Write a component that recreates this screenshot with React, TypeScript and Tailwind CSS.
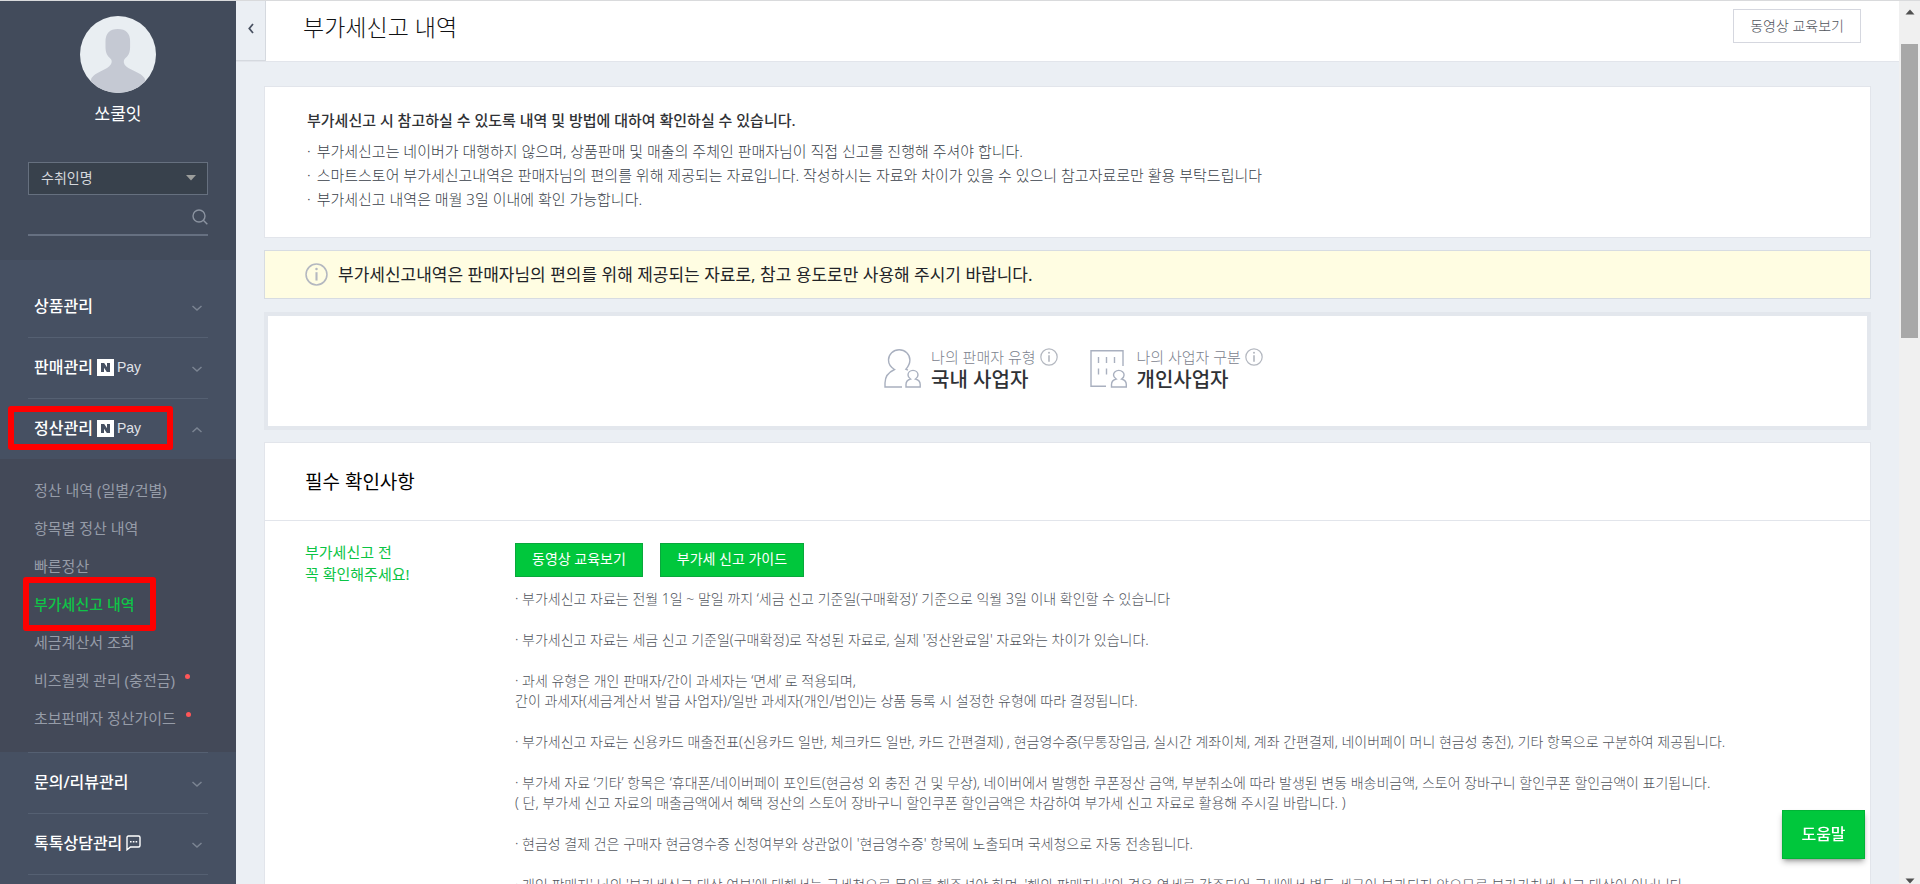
import type { ReactNode } from "react";

function Chevron({ up = false }: { up?: boolean }) {
  return (
    <svg width="12" height="8" viewBox="0 0 12 8" fill="none" stroke="#7b8492" strokeWidth="1.5" aria-hidden="true">
      <path d={up ? "M1.500 6 6 2l4.500 4" : "M1.500 2 6 6l4.500-4"} />
    </svg>
  );
}

function NPay() {
  return (
    <span className="flex items-center gap-[3px]">
      <svg width="17" height="17" viewBox="0 0 17 17" aria-hidden="true">
        <rect width="17" height="17" fill="#fff" />
        <path d="M4 4h3.200l2.800 4.200V4h3v9H9.800L7 8.800V13H4z" fill="#465062" />
      </svg>
      <span className="font-['Liberation_Sans'] text-[14px] leading-[17px] text-[#e0e3e8]">Pay</span>
    </span>
  );
}

function TalkIcon() {
  return (
    <svg width="15" height="16" viewBox="0 0 15 16" fill="none" aria-hidden="true">
      <path d="M2.500 1h10q1.500 0 1.500 1.500v8q0 1.500-1.500 1.500H4.500L1 14.800V2.500Q1 1 2.500 1z" stroke="#fff" strokeWidth="1.400" />
      <path d="M4 6h1.600v1.600H4zM6.800 6h1.600v1.600H6.800zM9.600 6h1.600v1.600H9.600z" fill="#fff" />
    </svg>
  );
}

function InfoIcon({ size }: { size: number }) {
  return (
    <svg width={size} height={size} viewBox="0 0 22 22" fill="none" stroke="#b4b8c0" strokeWidth="1.500" aria-hidden="true">
      <circle cx="11" cy="11" r="10" />
      <path d="M11 8.800v8" strokeWidth="2" />
      <circle cx="11" cy="5.800" r="1.200" fill="#b4b8c0" stroke="none" />
    </svg>
  );
}

function SellerIcon() {
  return (
    <svg width="37" height="39" viewBox="0 0 37 39" fill="none" stroke="#a9b0bf" strokeWidth="1.400" aria-hidden="true">
      <path d="M18 38H1v-4c0-6 3-10.500 9.500-13.500C6.500 18 4.500 15 4.500 11a10.700 10.300 0 0 1 21.400 0c0 4-2 7-4 9.200l2 1" />
      <path d="M22 38v-2.500c0-3 1.300-4.500 4.500-5.500-1.500-1-2.500-2.200-2.500-4a5 4.600 0 0 1 10 0c0 1.800-1 3-2.500 4 3.200 1 4.700 2.500 4.700 5.500V38z" />
    </svg>
  );
}

function BusinessIcon() {
  return (
    <svg width="37" height="39" viewBox="0 0 37 39" fill="none" stroke="#a9b0bf" strokeWidth="1.400" aria-hidden="true">
      <path d="M16 37.300H1V1.700h32V17" />
      <path d="M8.500 8v6M16.500 8v6M24.500 8v6M8.500 19.500v6M16.500 19.500v6" />
      <path d="M21.500 38v-2.500c0-3 1.500-4.500 4.700-5.500-1.500-1-2.700-2.200-2.700-4a5.300 4.600 0 0 1 10.600 0c0 1.800-1 3-2.500 4 3.200 1 4.700 2.500 4.700 5.500V38z" />
    </svg>
  );
}

function MenuRow({ label, icon, up = false, marked = false }: { label: string; icon?: ReactNode; up?: boolean; marked?: boolean }) {
  return (
    <div className="relative px-7">
      <button type="button" className="flex h-[60px] w-full items-center gap-1 pr-[5px] pb-0.5 pl-1.5 text-left text-[16px] font-medium text-white">
        <span>{label}</span>
        {icon}
        <span className="ml-auto pt-1"><Chevron up={up} /></span>
      </button>
      {marked && <span className="pointer-events-none absolute top-[7px] left-2 h-11 w-[165px] rounded-[3px] border-6 border-[#ff0000]" />}
    </div>
  );
}

const Divider = () => <div className="mx-7 h-px bg-[#556072]" />;

const subMenu = [
  { label: "정산 내역 (일별/건별)" },
  { label: "항목별 정산 내역" },
  { label: "빠른정산" },
  { label: "부가세신고 내역", active: true },
  { label: "세금계산서 조회" },
  { label: "비즈월렛 관리 (충전금)", dot: true },
  { label: "초보판매자 정산가이드", dot: true },
];

const intro = [
  "부가세신고는 네이버가 대행하지 않으며, 상품판매 및 매출의 주체인 판매자님이 직접 신고를 진행해 주셔야 합니다.",
  "스마트스토어 부가세신고내역은 판매자님의 편의를 위해 제공되는 자료입니다. 작성하시는 자료와 차이가 있을 수 있으니 참고자료로만 활용 부탁드립니다",
  "부가세신고 내역은 매월 3일 이내에 확인 가능합니다.",
];

const details = [
  ["부가세신고 자료는 전월 1일 ~ 말일 까지 ‘세금 신고 기준일(구매확정)’ 기준으로 익월 3일 이내 확인할 수 있습니다"],
  ["부가세신고 자료는 세금 신고 기준일(구매확정)로 작성된 자료로, 실제 '정산완료일' 자료와는 차이가 있습니다."],
  ["과세 유형은 개인 판매자/간이 과세자는 ‘면세’ 로 적용되며,", "간이 과세자(세금계산서 발급 사업자)/일반 과세자(개인/법인)는 상품 등록 시 설정한 유형에 따라 결정됩니다."],
  ["부가세신고 자료는 신용카드 매출전표(신용카드 일반, 체크카드 일반, 카드 간편결제) , 현금영수증(무통장입금, 실시간 계좌이체, 계좌 간편결제, 네이버페이 머니 현금성 충전), 기타 항목으로 구분하여 제공됩니다."],
  ["부가세 자료 ‘기타’ 항목은 ‘휴대폰/네이버페이 포인트(현금성 외 충전 건 및 무상), 네이버에서 발행한 쿠폰정산 금액, 부분취소에 따라 발생된 변동 배송비금액, 스토어 장바구니 할인쿠폰 할인금액이 표기됩니다.", "( 단, 부가세 신고 자료의 매출금액에서 혜택 정산의 스토어 장바구니 할인쿠폰 할인금액은 차감하여 부가세 신고 자료로 활용해 주시길 바랍니다. )"],
  ["현금성 결제 건은 구매자 현금영수증 신청여부와 상관없이 '현금영수증' 항목에 노출되며 국세청으로 자동 전송됩니다."],
  ["개인 판매자' 님의 '부가세신고 대상 여부'에 대해서는 국세청으로 문의를 해주셔야 하며, '해외 판매자님'의 경우 영세로 간주되어 국내에서 별도 세금이 부과되지 않으므로 부가가치세 신고 대상이 아닙니다."],
];

function Sidebar() {
  return (
    <aside className="flex w-[236px] shrink-0 flex-col overflow-hidden bg-[#424b5b]">
      <div className="flex h-[259px] shrink-0 flex-col px-7 pt-[15px]">
        <svg className="self-center" width="76" height="77" viewBox="0 0 76 77" role="img" aria-label="프로필">
          <clipPath id="avatar"><ellipse cx="38" cy="38.500" rx="38" ry="38.500" /></clipPath>
          <g clipPath="url(#avatar)">
            <rect width="76" height="77" fill="#e9eef2" />
            <path d="M25.500 25.500q0-12.500 12.300-12.500t12.300 12.500v5.500c0 6-2 9-5.500 12-1.500 2-1 5 1.400 7.200C52 55 60 56 64.500 62q1.500 2.500 0 15h-53q-1.500-12.500 0-15c4.500-6 12-7 17.800-11.800 2.400-2.200 3.200-5.200 1.500-7.200-3.300-3-5.300-6-5.300-12z" fill="#c5c9d3" />
          </g>
        </svg>
        <p className="mt-2 text-center text-[17px] leading-[26px] text-white">쏘쿨잇</p>
        <div className="relative mt-[35px]">
          <select aria-label="검색 조건" className="block h-[33px] w-full appearance-none border border-[#66707f] bg-[#38414c] pb-0.5 pl-3 text-[14px] text-[#d5d8dd]">
            <option>수취인명</option>
          </select>
          <svg className="pointer-events-none absolute top-[13px] right-3" width="10" height="6" viewBox="0 0 10 6" aria-hidden="true"><path d="M0 0h10L5 5.500z" fill="#9c9e9c" /></svg>
        </div>
        <div className="mt-1 flex h-[37px] items-center border-b-2 border-[#667081]">
          <input aria-label="검색어" className="min-w-0 flex-1 bg-transparent text-[14px] text-white outline-none" />
          <button type="button" aria-label="검색">
            <svg width="16" height="16" viewBox="0 0 16 16" fill="none" stroke="#8b93a0" strokeWidth="1.400" aria-hidden="true"><circle cx="7" cy="7" r="6" /><path d="m11.300 11.300 4 4" /></svg>
          </button>
        </div>
      </div>
      <nav className="flex-1 bg-[#465062]">
        <div className="pt-[17px]"><MenuRow label="상품관리" /></div>
        <Divider />
        <MenuRow label="판매관리" icon={<NPay />} />
        <Divider />
        <MenuRow label="정산관리" icon={<NPay />} up marked />
        <ul className="bg-[#434958] pt-3 pb-[15px]">
          {subMenu.map((item) => (
            <li key={item.label} className="relative flex h-[38px] items-center px-[34px]">
              <a href="#" className={item.active ? "text-[15px] font-medium text-[#0fc447]" : "text-[15px] text-[#969ca8]"}>{item.label}</a>
              {item.dot && <span className="mb-2 ml-2.5 size-[5px] rounded-full bg-[#ff5658]" />}
              {item.active && <span className="pointer-events-none absolute -top-2 left-[23px] h-[54px] w-[133px] rounded-[3px] border-6 border-[#ff0000]" />}
            </li>
          ))}
        </ul>
        <Divider />
        <MenuRow label="문의/리뷰관리" />
        <Divider />
        <MenuRow label="톡톡상담관리" icon={<TalkIcon />} />
        <Divider />
      </nav>
    </aside>
  );
}

function Identity({ icon, label, value }: { icon: ReactNode; label: string; value: string }) {
  return (
    <div className="flex items-center gap-2.5">
      {icon}
      <div className="pt-0.5">
        <div className="flex h-[22px] items-center gap-1 text-[15px] font-light text-[#7c828e]">
          {label}
          <button type="button" aria-label={`${label} 안내`}><InfoIcon size={18} /></button>
        </div>
        <div className="text-[20px] leading-6 font-medium text-[#303236]">{value}</div>
      </div>
    </div>
  );
}

function Scrollbar() {
  return (
    <div className="flex w-[21px] shrink-0 flex-col items-center bg-[#f0f0f0]" aria-hidden="true">
      <svg className="mt-2" width="10" height="6" viewBox="0 0 10 6"><path d="M5 0.500 9.500 5.500h-9z" fill="#505050" /></svg>
      <div className="mt-[29px] h-1/3 w-[17px] bg-[#a8a8a8]" />
      <svg className="mt-auto" width="10" height="6" viewBox="0 0 10 6"><path d="M0.500 0.500h9L5 5.500z" fill="#505050" /></svg>
    </div>
  );
}

export default function App() {
  return (
    <div className="flex h-screen overflow-hidden border-t border-[#d9dadc] bg-[#ebeff4] font-['Noto_Sans','Noto_Sans_CJK_KR',sans-serif] text-[#303236]">
      <Sidebar />
      <main className="min-w-0 flex-1 overflow-hidden">
        <header className="flex h-[61px] items-stretch border-b border-[#e2e5eb] bg-white">
          <button type="button" aria-label="메뉴 접기" className="flex w-[30px] items-center justify-center border-r border-b border-[#d5d9df] bg-[#ebeff4]">
            <svg className="mb-1" width="6" height="11" viewBox="0 0 6 11" fill="none" stroke="#4a5262" strokeWidth="1.800" aria-hidden="true"><path d="M5 1 1.300 5.500 5 10" /></svg>
          </button>
          <h1 className="pt-2.5 pl-[37px] text-[23px] leading-8 font-light text-[#111214]">부가세신고 내역</h1>
          <button type="button" className="mt-2 mr-[38px] ml-auto h-[34px] border border-[#d5d7df] px-4 pb-0.5 text-[14px] font-light text-[#50545c]">동영상 교육보기</button>
        </header>
        <div className="flex flex-col pt-6 pr-7 pl-7">
          <section className="border border-[#e2e5eb] bg-white px-[42px] pt-[21px] pb-[26px]">
            <h2 className="text-[15px] leading-6 font-medium">부가세신고 시 참고하실 수 있도록 내역 및 방법에 대하여 확인하실 수 있습니다.</h2>
            <ul className="mt-[7px] text-[15px] leading-6 font-light text-[#3a3f4a]">
              {intro.map((t) => <li key={t} className="flex gap-1.5"><span>·</span>{t}</li>)}
            </ul>
          </section>
          <section className="mt-3 flex h-[49px] items-center gap-2.5 border border-[#d7dce2] bg-[#fffde2] px-10 text-[17px] text-[#222428]">
            <InfoIcon size={23} />
            <p>부가세신고내역은 판매자님의 편의를 위해 제공되는 자료로, 참고 용도로만 사용해 주시기 바랍니다.</p>
          </section>
          <section className="mt-[13px] flex h-[118px] items-center justify-center gap-8 border-4 border-[#e3e7ed] bg-white pb-1.5 pl-3">
            <Identity icon={<SellerIcon />} label="나의 판매자 유형" value="국내 사업자" />
            <Identity icon={<BusinessIcon />} label="나의 사업자 구분" value="개인사업자" />
          </section>
          <section className="mt-3 border border-[#e2e5eb] bg-white">
            <h2 className="flex h-[78px] items-center border-b border-[#e2e5eb] px-10 pt-0.5 text-[19px] text-black">필수 확인사항</h2>
            <div className="flex px-10 pt-5 pb-10">
              <h3 className="w-[210px] shrink-0 text-[15px] leading-[22px] text-[#0bc445]">부가세신고 전<br />꼭 확인해주세요!</h3>
              <div className="min-w-0 flex-1 pt-0.5 text-[14px] leading-5 font-light text-[#50545c]">
                <div className="flex gap-[17px]">
                  <button type="button" className="h-[34px] border border-[#09a83c] bg-[#00c73c] px-4 pb-0.5 font-normal text-white">동영상 교육보기</button>
                  <button type="button" className="h-[34px] border border-[#09a83c] bg-[#00c73c] px-4 pb-0.5 font-normal text-white">부가세 신고 가이드</button>
                </div>
                <ul className="mt-3 flex flex-col gap-[21px]">
                  {details.map((lines) => (
                    <li key={lines[0]} className="whitespace-nowrap">
                      {lines.map((line, i) => <p key={line}>{i === 0 ? `· ${line}` : line}</p>)}
                    </li>
                  ))}
                </ul>
              </div>
            </div>
          </section>
        </div>
      </main>
      <Scrollbar />
      <button type="button" className="fixed right-[55px] bottom-[25px] h-[49px] w-[83px] border border-[#00b536] bg-[#00c73c] pb-0.5 text-[16px] font-medium text-white shadow-md shadow-black/30">도움말</button>
    </div>
  );
}
